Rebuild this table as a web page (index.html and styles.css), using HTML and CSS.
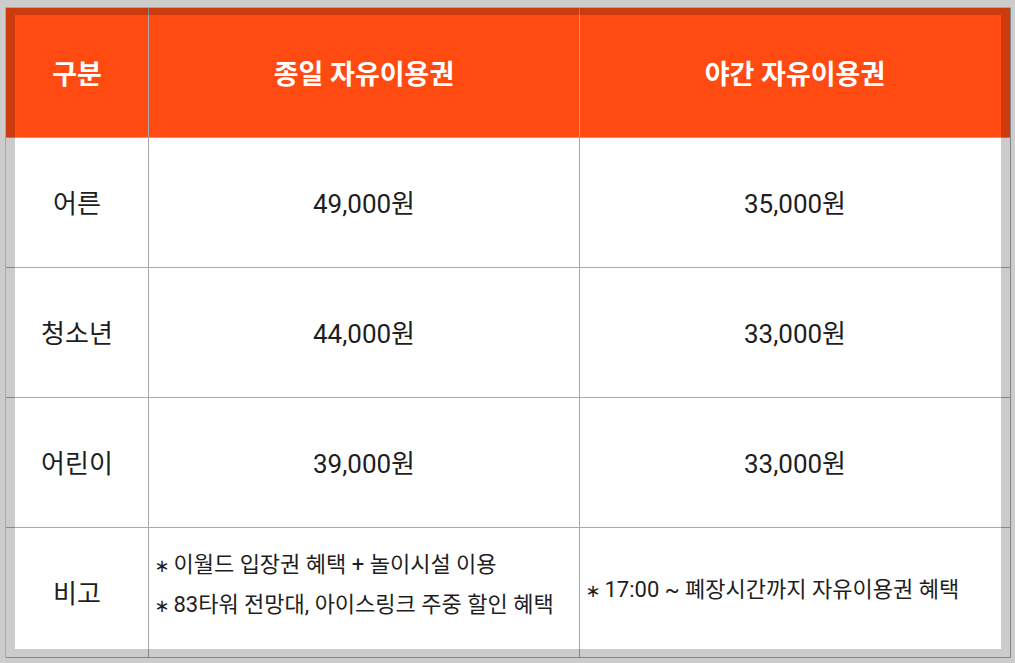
FILE: index.html
```html
<!DOCTYPE html>
<html lang="ko">
<head>
<meta charset="utf-8">
<link rel="stylesheet" href="styles.css">
</head>
<body>
<div class="frame">
  <div class="grid">
    <div class="cell head">구분</div>
    <div class="cell head">종일 자유이용권</div>
    <div class="cell head">야간 자유이용권</div>

    <div class="cell">어른</div>
    <div class="cell">49,000원</div>
    <div class="cell">35,000원</div>

    <div class="cell">청소년</div>
    <div class="cell">44,000원</div>
    <div class="cell">33,000원</div>

    <div class="cell">어린이</div>
    <div class="cell">39,000원</div>
    <div class="cell">33,000원</div>

    <div class="cell">비고</div>
    <div class="cell note note-two">
      <p><span class="star">∗</span> 이월드 입장권 혜택 + 놀이시설 이용</p>
      <p><span class="star">∗</span> 83타워 전망대, 아이스링크 주중 할인 혜택</p>
    </div>
    <div class="cell note note-one">
      <p><span class="star">∗</span> 17:00 ~ 폐장시간까지 자유이용권 혜택</p>
    </div>
  </div>
  <div class="shade"></div>
</div>
</body>
</html>
```

FILE: styles.css
```css
html, body {
  margin: 0;
  padding: 0;
}

body {
  background: #cccccc;
  width: 1015px;
  height: 663px;
  overflow: hidden;
  font-family: Roboto, "Noto Sans CJK KR", sans-serif;
  color: #1e1e1e;
}

.frame {
  position: relative;
  margin: 7px 0 0 5px;
  width: 1006px;
  height: 651px;
  box-sizing: border-box;
}

.grid {
  display: grid;
  grid-template-columns: 143px 431px 431px;
  grid-template-rows: repeat(5, 130px);
  border-left: 1px solid #a9a9a9;
  border-top: 1px solid #a9a9a9;
  background: #ffffff;
}

.cell {
  border-right: 1px solid #a9a9a9;
  border-bottom: 1px solid #a9a9a9;
  display: flex;
  align-items: center;
  justify-content: center;
  font-size: 26px;
  padding-bottom: 2px;
  box-sizing: border-box;
}

.head {
  background: #ff4a12;
  color: #ffffff;
  font-weight: 700;
  font-size: 27px;
  padding-bottom: 0;
}

.note {
  flex-direction: column;
  align-items: flex-start;
  justify-content: center;
  padding-left: 7px;
  font-size: 22px;
}

.note-two {
  padding-bottom: 15px;
}

.note-one {
  padding-bottom: 5px;
}

.note p {
  margin: 0;
  line-height: 39px;
}

.star {
  display: inline-flex;
  justify-content: center;
  width: 12px;
  font-family: "DejaVu Sans", sans-serif;
  font-size: 18px;
}

.shade {
  position: absolute;
  top: 1px;
  left: 1px;
  right: 0;
  bottom: 0;
  border-style: solid;
  border-color: rgba(0, 0, 0, 0.2);
  border-width: 7px 10px 9px 9px;
  pointer-events: none;
}
```
